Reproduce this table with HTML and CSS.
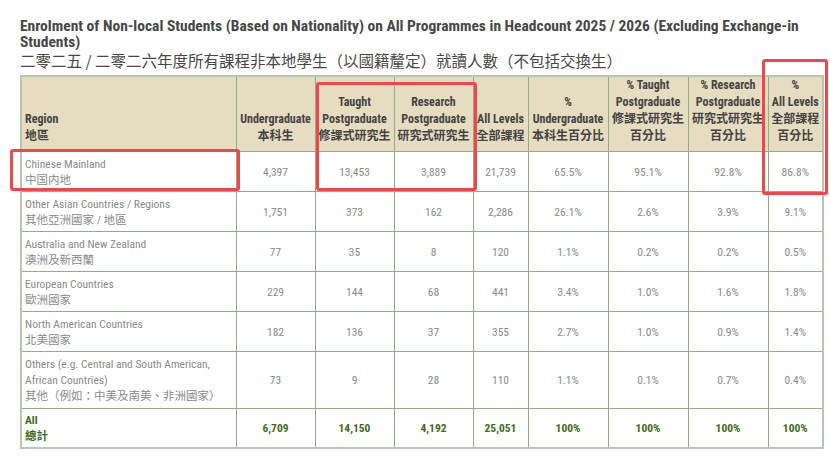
FILE: index.html
```html
<!DOCTYPE html>
<html>
<head>
<meta charset="utf-8">
<link rel="stylesheet" href="styles.css">
</head>
<body>
<div class="page">
  <h1 class="title">Enrolment of Non-local Students (Based on Nationality) on All Programmes in Headcount 2025 / 2026 (Excluding Exchange-in Students)</h1>
  <h2 class="subtitle">二零二五 / 二零二六年度所有課程非本地學生（以國籍釐定）就讀人數（不包括交換生）</h2>
  <div class="table-wrap">
    <table class="data">
      <colgroup>
        <col class="c-region"><col class="c-n"><col class="c-n"><col class="c-n"><col class="c-all"><col class="c-p"><col class="c-p"><col class="c-p"><col class="c-all">
      </colgroup>
      <thead>
        <tr>
          <th class="left">Region<br>地區</th>
          <th>Undergraduate<br>本科生</th>
          <th>Taught<br>Postgraduate<br>修課式研究生</th>
          <th>Research<br>Postgraduate<br>研究式研究生</th>
          <th>All Levels<br>全部課程</th>
          <th>%<br>Undergraduate<br>本科生百分比</th>
          <th>% Taught<br>Postgraduate<br>修課式研究生<br>百分比</th>
          <th>% Research<br>Postgraduate<br>研究式研究生<br>百分比</th>
          <th>%<br>All Levels<br>全部課程<br>百分比</th>
        </tr>
      </thead>
      <tbody>
        <tr><td class="left">Chinese Mainland<br>中国内地</td><td>4,397</td><td>13,453</td><td>3,889</td><td>21,739</td><td>65.5%</td><td>95.1%</td><td>92.8%</td><td>86.8%</td></tr>
        <tr><td class="left">Other Asian Countries / Regions<br>其他亞洲國家 / 地區</td><td>1,751</td><td>373</td><td>162</td><td>2,286</td><td>26.1%</td><td>2.6%</td><td>3.9%</td><td>9.1%</td></tr>
        <tr><td class="left">Australia and New Zealand<br>澳洲及新西蘭</td><td>77</td><td>35</td><td>8</td><td>120</td><td>1.1%</td><td>0.2%</td><td>0.2%</td><td>0.5%</td></tr>
        <tr><td class="left">European Countries<br>歐洲國家</td><td>229</td><td>144</td><td>68</td><td>441</td><td>3.4%</td><td>1.0%</td><td>1.6%</td><td>1.8%</td></tr>
        <tr><td class="left">North American Countries<br>北美國家</td><td>182</td><td>136</td><td>37</td><td>355</td><td>2.7%</td><td>1.0%</td><td>0.9%</td><td>1.4%</td></tr>
        <tr class="tall"><td class="left">Others (e.g. Central and South American,<br>African Countries)<br>其他（例如：中美及南美、非洲國家）</td><td>73</td><td>9</td><td>28</td><td>110</td><td>1.1%</td><td>0.1%</td><td>0.7%</td><td>0.4%</td></tr>
        <tr class="total"><td class="left">All<br>總計</td><td>6,709</td><td>14,150</td><td>4,192</td><td>25,051</td><td>100%</td><td>100%</td><td>100%</td><td>100%</td></tr>
      </tbody>
    </table>
    <div class="mark mark-region"></div>
    <div class="mark mark-pg"></div>
    <div class="mark mark-all"></div>
  </div>
</div>
</body>
</html>
```
FILE: styles.css
```css
html, body {
  margin: 0;
  padding: 0;
  background: #fff;
}
.page {
  padding: 18px 0 0 20px;
  font-family: "Roboto Condensed", "Liberation Sans Narrow", Roboto, "Noto Sans CJK TC", sans-serif;
  color: #4a4a4a;
}
.title {
  margin: 0;
  font-size: 15.5px;
  line-height: 16px;
  font-weight: bold;
  width: 790px;
  color: #474747;
}
.subtitle {
  margin: 0;
  font-size: 15.5px;
  line-height: 20px;
  font-weight: normal;
  color: #474747;
  font-family: "Liberation Sans Narrow", "Noto Sans CJK TC", sans-serif;
}
.table-wrap {
  position: relative;
  margin-top: 5px;
  width: 803px;
}
.data {
  border-collapse: collapse;
  width: 803px;
  table-layout: fixed;
  border: 2px solid #b5c7ae;
}
.c-region { width: 215px; }
.c-n { width: 79px; }
.c-all { width: 55px; }
.c-p { width: 80px; }
.data th, .data td {
  border: 1px solid #8fae88;
  text-align: center;
  padding: 0 2px;
}
.data th {
  background: #e6dcc0;
  color: #444;
  font-size: 12px;
  font-weight: bold;
  vertical-align: bottom;
  line-height: 17px;
  height: 74px;
  padding-bottom: 6px;
  box-sizing: border-box;
}
.data td {
  color: #8a8a8a;
  font-size: 11.5px;
  height: 40px;
  line-height: 16px;
  vertical-align: middle;
  box-sizing: border-box;
}
.data .left {
  text-align: left;
  padding-left: 3px;
}
.data tr.tall td { height: 57px; }
.data tr.total td {
  color: #3f6a22;
  font-weight: bold;
  height: 39px;
}
.mark {
  position: absolute;
  border: 3px solid #f2464a;
  border-radius: 3px;
  box-sizing: border-box;
}
.mark-region { left: -10px; top: 74px; width: 230px; height: 42px; }
.mark-pg { left: 296px; top: 7px; width: 161px; height: 109px; }
.mark-all { left: 742px; top: -16px; width: 66px; height: 136px; }
```
